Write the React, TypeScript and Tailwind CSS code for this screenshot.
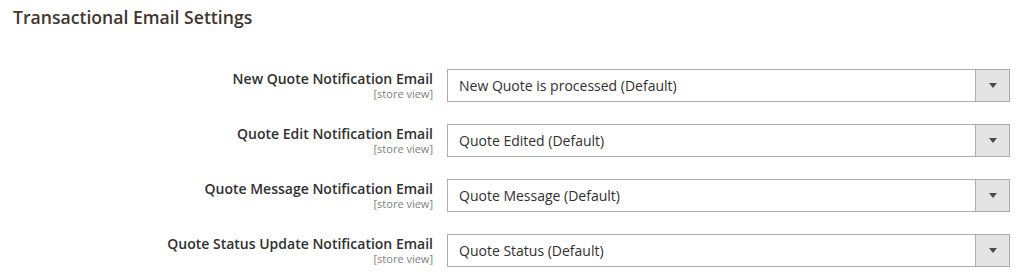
// ---------------------------------------------------------------------------
// Data
// ---------------------------------------------------------------------------

interface EmailField {
  label: string;
  value: string;
}

const FIELDS: EmailField[] = [
  { label: 'New Quote Notification Email', value: 'New Quote is processed (Default)' },
  { label: 'Quote Edit Notification Email', value: 'Quote Edited (Default)' },
  { label: 'Quote Message Notification Email', value: 'Quote Message (Default)' },
  { label: 'Quote Status Update Notification Email', value: 'Quote Status (Default)' },
];

// ---------------------------------------------------------------------------
// Select box
// ---------------------------------------------------------------------------

function FakeSelect({ value }: { value: string }) {
  return (
    <div className="flex h-[33px] w-[563px] border border-[#adadad] bg-white">
      <div className="flex flex-1 items-center pl-[11px] text-[14px] text-[#303030]">
        {value}
      </div>
      <div className="flex w-[34px] items-center justify-center border-l border-[#adadad] bg-[#e3e3e3]">
        {/* small solid triangle */}
        <svg width="8" height="5" viewBox="0 0 8 5">
          <path d="M0 0h8L4 5z" fill="#514943" />
        </svg>
      </div>
    </div>
  );
}

// ---------------------------------------------------------------------------
// Page
// ---------------------------------------------------------------------------

export default function App() {
  return (
    <div
      className="h-[278px] w-[1020px] bg-white"
      style={{ fontFamily: '"Open Sans", sans-serif' }}
    >
      <h2 className="pl-[13px] pt-[5px] text-[17.6px] font-semibold leading-[24px] text-[#41362f]">
        Transactional Email Settings
      </h2>

      <div className="mt-[40px] flex flex-col gap-[22px]">
        {FIELDS.map((f) => (
          <div key={f.label} className="flex items-start">
            <div className="w-[433px] text-right">
              <div className="text-[14px] font-semibold leading-[19px] text-[#303030]">
                {f.label}
              </div>
              <div className="text-[11px] leading-[11px] text-[#808080]">
                [store view]
              </div>
            </div>
            <div className="ml-[14px]">
              <FakeSelect value={f.value} />
            </div>
          </div>
        ))}
      </div>
    </div>
  );
}
